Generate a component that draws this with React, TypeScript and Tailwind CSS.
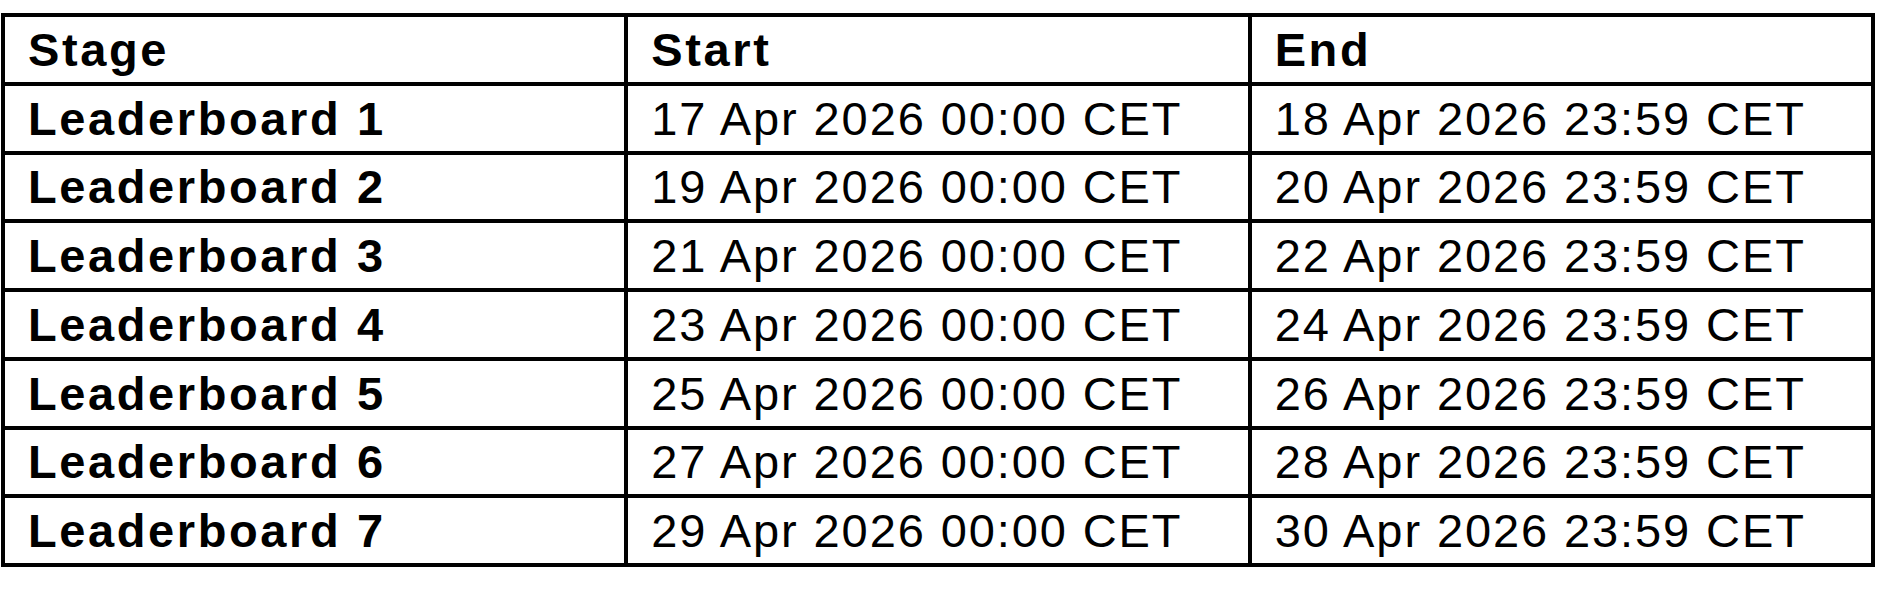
const rows = [
  ['Leaderboard 1', '17 Apr 2026 00:00 CET', '18 Apr 2026 23:59 CET'],
  ['Leaderboard 2', '19 Apr 2026 00:00 CET', '20 Apr 2026 23:59 CET'],
  ['Leaderboard 3', '21 Apr 2026 00:00 CET', '22 Apr 2026 23:59 CET'],
  ['Leaderboard 4', '23 Apr 2026 00:00 CET', '24 Apr 2026 23:59 CET'],
  ['Leaderboard 5', '25 Apr 2026 00:00 CET', '26 Apr 2026 23:59 CET'],
  ['Leaderboard 6', '27 Apr 2026 00:00 CET', '28 Apr 2026 23:59 CET'],
  ['Leaderboard 7', '29 Apr 2026 00:00 CET', '30 Apr 2026 23:59 CET'],
];

function Cell({ children, bold }: { children: React.ReactNode; bold?: boolean }) {
  return (
    <div
      className={`flex h-[64.75px] items-center bg-white pl-[23px] text-[47px] leading-none text-black ${
        bold ? 'font-bold tracking-[2.6px]' : 'font-normal tracking-[1.9px]'
      }`}
    >
      {children}
    </div>
  );
}

export default function App() {
  return (
    <div className="h-[597px] w-[1878px] bg-white pt-[13px] pl-px font-['Liberation_Sans',Arial,sans-serif]">
      <div className="grid w-[1874px] grid-cols-3 gap-[4px] bg-black p-[4px]">
        <Cell bold>Stage</Cell>
        <Cell bold>Start</Cell>
        <Cell bold>End</Cell>
        {rows.map(([stage, start, end]) => (
          <div key={stage} className="contents">
            <Cell bold>{stage}</Cell>
            <Cell>{start}</Cell>
            <Cell>{end}</Cell>
          </div>
        ))}
      </div>
    </div>
  );
}
